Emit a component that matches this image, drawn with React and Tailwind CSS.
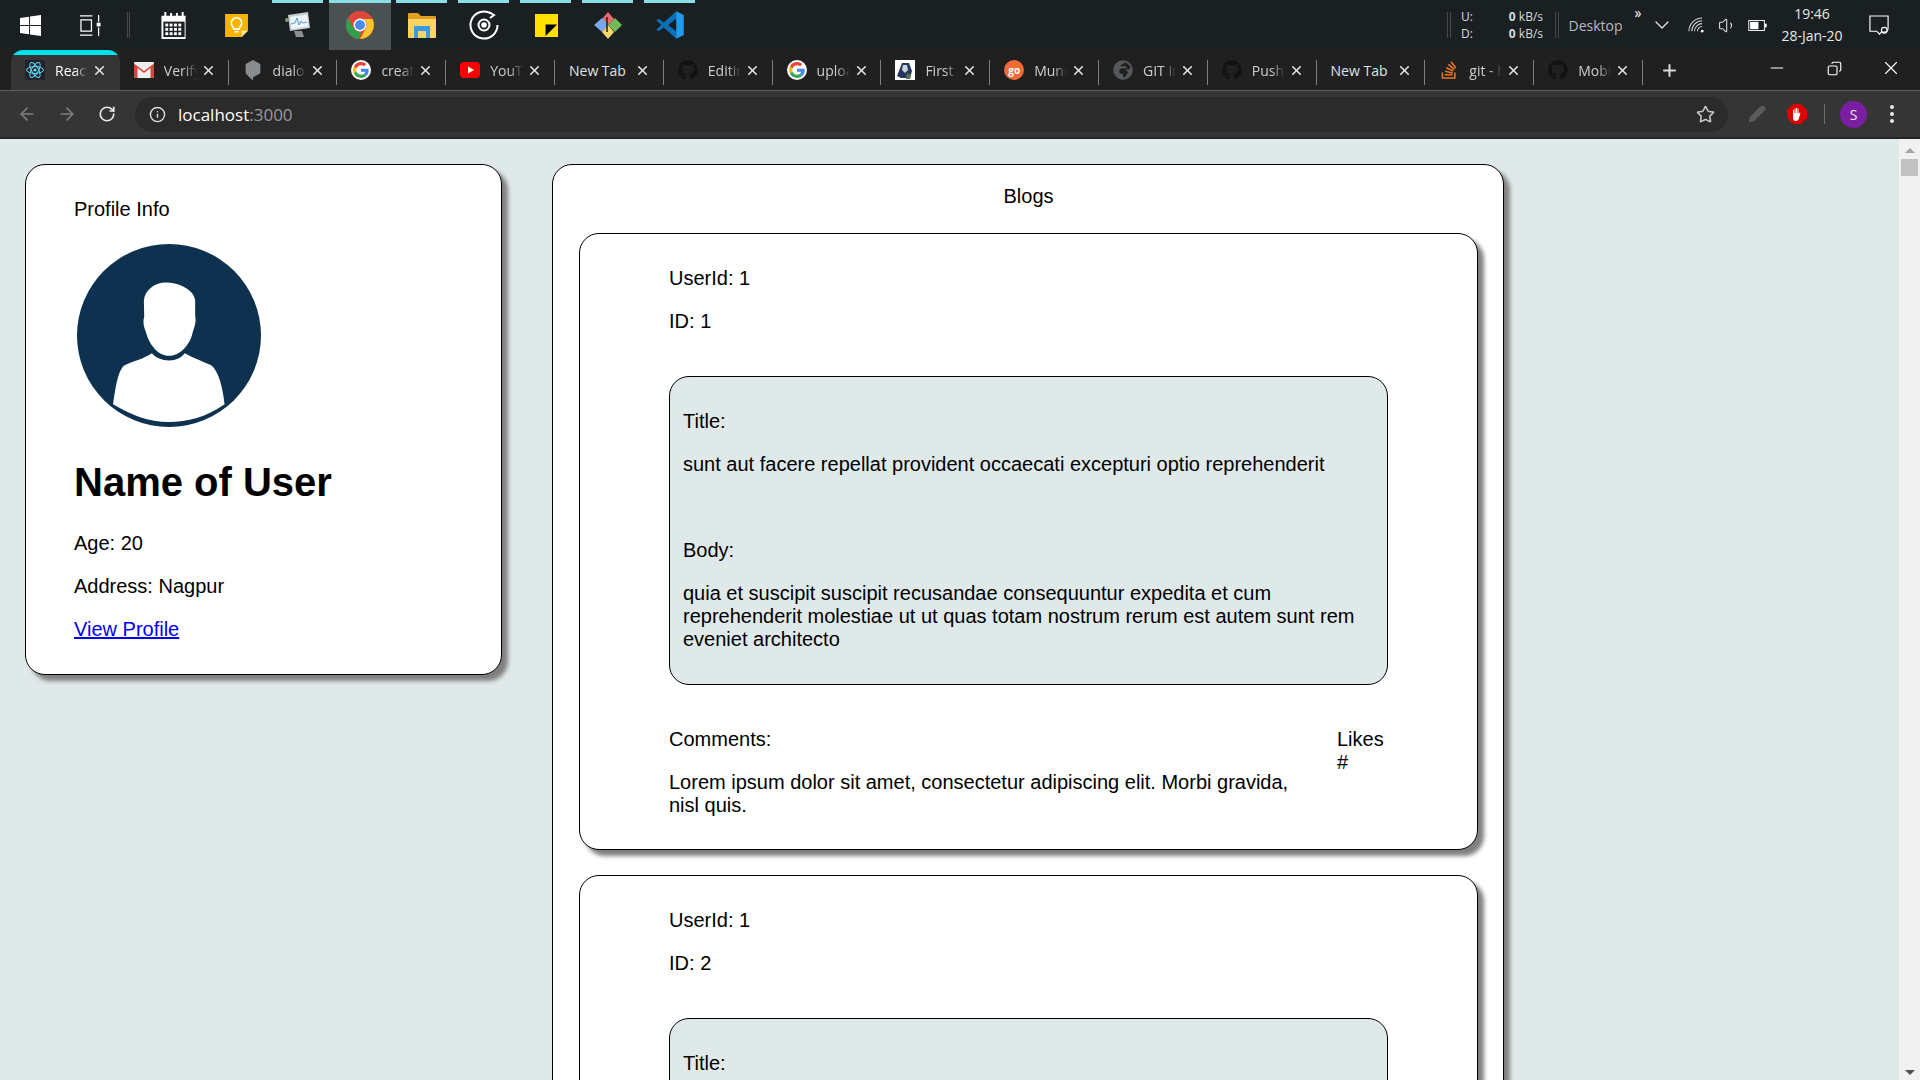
import { ArrowLeft, ArrowRight, RotateCw, Info, Star, X, Plus, Minus, Pencil, ChevronDown, Copy, Volume1 } from 'lucide-react';
import { FaGithub, FaStackOverflow, FaGlobeAfrica } from 'react-icons/fa';

const GoogleG = () => (
  <span className="flex h-5 w-5 items-center justify-center rounded-full bg-white">
    <svg viewBox="0 0 48 48" className="h-4 w-4">
      <path fill="#EA4335" d="M24 9.5c3.54 0 6.71 1.22 9.21 3.6l6.85-6.85C35.9 2.38 30.47 0 24 0 14.62 0 6.51 5.38 2.56 13.22l7.98 6.19C12.43 13.72 17.74 9.5 24 9.5z" />
      <path fill="#4285F4" d="M46.98 24.55c0-1.57-.15-3.09-.38-4.55H24v9.02h12.94c-.58 2.96-2.26 5.48-4.78 7.18l7.73 6c4.51-4.18 7.09-10.36 7.09-17.65z" />
      <path fill="#FBBC05" d="M10.53 28.59c-.48-1.45-.76-2.99-.76-4.59s.27-3.14.76-4.59l-7.98-6.19C.92 16.46 0 20.12 0 24c0 3.88.92 7.54 2.56 10.78l7.97-6.19z" />
      <path fill="#34A853" d="M24 48c6.48 0 11.93-2.13 15.89-5.81l-7.73-6c-2.15 1.45-4.92 2.3-8.16 2.3-6.26 0-11.57-4.22-13.47-9.91l-7.98 6.19C6.51 42.62 14.62 48 24 48z" />
    </svg>
  </span>
);

const ReactIcon = () => (
  <svg viewBox="0 0 20 20" className="h-5 w-5">
    <rect width="20" height="20" rx="2" fill="#20232a" />
    <g fill="none" stroke="#61dafb" strokeWidth="1">
      <ellipse cx="10" cy="10" rx="8.5" ry="3.4" />
      <ellipse cx="10" cy="10" rx="8.5" ry="3.4" transform="rotate(60 10 10)" />
      <ellipse cx="10" cy="10" rx="8.5" ry="3.4" transform="rotate(120 10 10)" />
    </g>
    <circle cx="10" cy="10" r="1.6" fill="#61dafb" />
  </svg>
);

const GmailIcon = () => (
  <svg viewBox="0 0 20 16" className="h-4 w-5">
    <rect width="20" height="16" rx="1" fill="#eee" />
    <path d="M0 1.5 10 9l10-7.5V15a1 1 0 0 1-1 1h-2.5V6L10 11 3.500 6v10H1a1 1 0 0 1-1-1z" fill="#d44638" />
  </svg>
);

const DialogIcon = () => (
  <svg viewBox="0 0 20 24" className="h-[22px] w-5">
    <path d="M10 1 18 5.500v10L10 20v3.500L6 20 2 15.500v-10z" fill="#8a8d8f" />
  </svg>
);

const YoutubeIcon = () => (
  <svg viewBox="0 0 20 20" className="h-5 w-5">
    <rect y="2" width="20" height="16" rx="4" fill="#f00" />
    <path d="M8 6.500 14 10l-6 3.500z" fill="#fff" />
  </svg>
);

const ThumbIcon = () => (
  <svg viewBox="0 0 20 20" className="h-5 w-5">
    <rect width="20" height="20" fill="#fff" />
    <path d="M2 16 7 3h7l3 8-2 7H6z" fill="#27375c" />
    <path d="M8 5h4l1 5-3 3-3-3z" fill="#c9d4de" />
    <path d="M12 13l4 2-1 4h-4z" fill="#56705a" />
  </svg>
);

const GoIcon = () => (
  <span className="flex h-5 w-5 items-center justify-center rounded-full bg-[#f26b36] text-[10px] font-bold leading-none text-white">go</span>
);

const GitDark = () => <FaGithub className="h-5 w-5 text-[#111213]" />;

const tabs = [
  { icon: <ReactIcon />, label: 'React App', active: true },
  { icon: <GmailIcon />, label: 'Verify your' },
  { icon: <DialogIcon />, label: 'dialogflow' },
  { icon: <GoogleG />, label: 'create' },
  { icon: <YoutubeIcon />, label: 'YouTube' },
  { label: 'New Tab', plain: true },
  { icon: <GitDark />, label: 'Editing' },
  { icon: <GoogleG />, label: 'upload' },
  { icon: <ThumbIcon />, label: 'First' },
  { icon: <GoIcon />, label: 'Munna' },
  { icon: <FaGlobeAfrica className="h-5 w-5 text-[#55585c]" />, label: 'GIT Ins' },
  { icon: <GitDark />, label: 'Pushing' },
  { label: 'New Tab', plain: true },
  { icon: <FaStackOverflow className="h-5 w-5 text-[#e87722]" />, label: 'git - ho' },
  { icon: <GitDark />, label: 'Mobile' },
];

const Tab = ({ icon, label, active, plain }) => (
  <div className={`relative flex h-full w-[108.8px] shrink-0 items-center ${active ? 'overflow-hidden rounded-t-xl bg-[#353535]' : ''}`}>
    {active && <div className="absolute inset-x-0 top-0 h-[5px] bg-[#00e3ee]" />}
    {plain ? (
      <span className="ml-[14px] w-[66px] shrink-0 overflow-hidden whitespace-nowrap text-[14px] text-[#dfe3e6]">{label}</span>
    ) : (
      <>
        <span className="ml-[14px] flex w-5 shrink-0 items-center justify-center">{icon}</span>
        <span className={`ml-[10px] w-[33px] shrink-0 overflow-hidden whitespace-nowrap text-[14px] [mask-image:linear-gradient(to_right,black_60%,transparent)] ${active ? 'text-white' : 'text-[#c9ced2]'}`}>{label}</span>
      </>
    )}
    <X className={`h-[15px] w-[15px] shrink-0 text-[#e3e3e3] ${plain ? 'ml-0' : 'ml-1'}`} strokeWidth={2.5} />
    {!active && <div className="absolute right-0 top-[10px] h-[25px] w-[1px] bg-[#7c7f80]" />}
  </div>
);

const TaskItem = ({ children, underline, active }) => (
  <div className={`relative flex h-[50px] w-[62px] shrink-0 items-center justify-center ${active ? 'bg-[#4b5051]' : ''}`}>
    {underline && <div className={`absolute top-0 h-[3px] bg-[#8adfe6] ${active ? 'inset-x-0' : 'left-[5px] right-[6px]'}`} />}
    {children}
  </div>
);

const Taskbar = () => (
  <div className="flex h-[50px] shrink-0 items-center bg-[#1a1f21] text-white">
    <div className="flex w-[60px] shrink-0 justify-center">
      <svg viewBox="0 0 22 22" className="h-[21px] w-[21px]">
        <path fill="#fff" d="M0 3.200 9.500 1.900V10.500H0zM10.500 1.700 22 0V10.500H10.500zM0 11.500H9.500V20.200L0 18.800zM10.500 11.500H22V22L10.500 20.400z" />
      </svg>
    </div>
    <div className="flex w-[60px] shrink-0 justify-center">
      <svg viewBox="0 0 22 22" className="h-[21px] w-[21px]" fill="none" stroke="#fff" strokeWidth="1.300">
        <path d="M0 1h13M0 21h13M1 5h11v12H1zM19.500 0v7M19.500 13v9" />
        <rect x="17.500" y="8" width="4" height="4" fill="#fff" stroke="none" />
      </svg>
    </div>
    <div className="ml-[7px] h-[26px] w-[3px] shrink-0 border-x border-[#45494b]" />
    <div className="w-[13px] shrink-0" />
    <TaskItem>
      <svg viewBox="0 0 26 28" className="h-[27px] w-[26px]">
        <path fill="#fff" d="M0 4h3V0h2v4h4V1h2v3h4V1h2v3h4V0h2v4h2v24H0z" />
        <rect x="2" y="10" width="22" height="16" fill="#1a1f21" />
        {[4, 8.500, 13, 17.500].map((x) => [12, 16.500, 21].map((y) => <rect key={`${x}-${y}`} x={x} y={y} width="3" height="3" fill="#fff" />))}
      </svg>
    </TaskItem>
    <TaskItem>
      <svg viewBox="0 0 24 24" className="h-[25px] w-[25px]">
        <path fill="#f4b400" d="M1 1h22v16l-6 6H1z" />
        <path fill="#fce8a8" d="M23 17h-6v6z" />
        <path fill="none" stroke="#fff" strokeWidth="1.500" d="M9.500 15.500c0-2-2.500-3-2.500-6a5 5 0 0 1 10 0c0 3-2.500 4-2.500 6zM10 18h4" />
      </svg>
    </TaskItem>
    <TaskItem underline>
      <svg viewBox="0 0 28 28" className="h-7 w-7">
        <path fill="#c7cdd1" d="M4 4 24 1l2 16-20 3z" />
        <path fill="#eff4f8" d="M6 6 23 3.500l1.500 12L7.500 18z" />
        <path fill="none" stroke="#4f9bd0" strokeWidth="1" d="M7 13l4-1 2-5 2 7 2-4 2 2 4-1" />
        <path fill="#8b9094" d="M10 20h8l2 6h-8z" />
        <circle cx="3" cy="9" r="2" fill="#7fa46e" />
      </svg>
    </TaskItem>
    <TaskItem underline active>
      <svg viewBox="0 0 28 28" className="h-7 w-7">
        <circle cx="14" cy="14" r="14" fill="#e0463a" />
        <path fill="#f7c52c" d="M14 8h12.600A14 14 0 0 1 14 28l6-11a6 6 0 0 0-6-9z" />
        <path fill="#2fa04e" d="M1.800 7 8 17.500A6.500 6.500 0 0 0 15 20.500L13.500 28A14 14 0 0 1 1.800 7z" />
        <circle cx="14" cy="14" r="6.500" fill="#fff" />
        <circle cx="14" cy="14" r="5" fill="#4a8bf0" />
      </svg>
    </TaskItem>
    <TaskItem underline>
      <svg viewBox="0 0 28 26" className="h-[26px] w-7">
        <path fill="#e0a020" d="M0 2a1 1 0 0 1 1-1h9l3 3h14a1 1 0 0 1 1 1v4H0z" />
        <path fill="#fcd462" d="M0 7h28v18a1 1 0 0 1-1 1H1a1 1 0 0 1-1-1z" />
        <path fill="#3c9be0" d="M6 14h16v12h-4v-7H10v7H6z" />
      </svg>
    </TaskItem>
    <TaskItem underline>
      <svg viewBox="0 0 30 30" className="h-[30px] w-[30px]" fill="none" stroke="#fff" strokeWidth="2">
        <path d="M22 3.500A13.500 13.500 0 1 0 28.500 15" />
        <circle cx="15" cy="15" r="5.500" />
        <circle cx="15" cy="15" r="1.800" fill="#fff" />
        <path d="M20 2l5 3-4 3" />
      </svg>
    </TaskItem>
    <TaskItem underline>
      <svg viewBox="0 0 24 24" className="h-[23px] w-[23px]">
        <rect width="24" height="24" fill="#ffe000" />
        <path d="M11 23 23 11H11z" fill="#000" />
      </svg>
    </TaskItem>
    <TaskItem underline>
      <svg viewBox="0 0 30 30" className="h-[30px] w-[30px]">
        <path fill="#e86a6f" d="m15 15-6-6 6-7 6 7z" />
        <path fill="#7aa7f0" d="m15 15-6 7-8-7 8-7z" />
        <path fill="#74b85a" d="m15 15 7-7 7 7-7 7z" />
        <path fill="#f5d76e" d="m15 15 6 7-6 7-6-7z" />
        <path stroke="#1a1f21" strokeWidth="1.500" d="M14 7v15" />
      </svg>
    </TaskItem>
    <TaskItem underline>
      <svg viewBox="0 0 24 24" className="h-[30px] w-[30px]">
        <path fill="#0a71b8" d="M17 1 7 10 3 7 1 8.200 5 12l-4 3.800L3 17l4-3 10 9v-6l-6.500-5L17 7z" />
        <path fill="#1f9cf0" d="m17 1 6 3v16l-6 3z" />
      </svg>
    </TaskItem>

    <div className="ml-auto flex h-full items-center pr-[18px]">
      <div className="h-[26px] w-[4px] shrink-0 border-x border-[#45494b]" />
      <div className="flex w-[104px] shrink-0 justify-between pl-[10px] pr-[12px] text-[12px] leading-[17px] text-[#d8dadb]">
        <div><div>U:</div><div>D:</div></div>
        <div><div><b>0</b> kB/s</div><div><b>0</b> kB/s</div></div>
      </div>
      <div className="h-[26px] w-[4px] shrink-0 border-x border-[#45494b]" />
      <div className="w-[73px] shrink-0 text-center text-[14px] text-[#b6babc]">Desktop</div>
      <div className="-mt-6 w-3 shrink-0 text-center text-[14px] leading-none">»</div>
      <div className="flex w-9 shrink-0 justify-center"><ChevronDown className="h-6 w-6 text-[#e4e4e4]" strokeWidth={1.300} /></div>
      <div className="flex w-8 shrink-0 justify-center">
        <svg viewBox="0 0 18 18" className="h-[17px] w-[17px]" fill="none" stroke="#cfd1d2" strokeWidth="1.100">
          <path d="M1 15A14 14 0 0 1 15 1M4 15A11 11 0 0 1 15 4M7 15a8 8 0 0 1 8-8M10 15a5 5 0 0 1 5-5" />
          <circle cx="15" cy="15" r="1.400" fill="#fff" stroke="none" />
        </svg>
      </div>
      <div className="flex w-[34px] shrink-0 justify-center pr-[4px]"><Volume1 className="h-[19px] w-[19px] text-[#e4e4e4]" strokeWidth={1.300} /></div>
      <div className="flex w-[22px] shrink-0 justify-center">
        <svg viewBox="0 0 20 12" className="h-[11px] w-[19px]">
          <rect x="0.500" y="0.500" width="17" height="11" fill="none" stroke="#fff" />
          <rect x="2" y="2" width="9" height="8" fill="#fff" />
          <rect x="18" y="4" width="2" height="4" fill="#fff" />
        </svg>
      </div>
      <div className="w-[88px] shrink-0 text-center text-[14px] leading-[22px] text-[#e8e8e8]">
        <div>19:46</div>
        <div>28-Jan-20</div>
      </div>
      <div className="flex w-[46px] shrink-0 justify-center">
        <svg viewBox="0 0 22 22" className="h-[21px] w-[21px]" fill="none" stroke="#fff" strokeWidth="1.200">
          <path d="M1 1h19v13a4 4 0 0 1-4 4h-3l-2 2-2-2-1-1H1z" />
          <circle cx="16" cy="16" r="3" />
        </svg>
      </div>
    </div>
  </div>
);

const TabStrip = () => (
  <div className="flex h-[41px] shrink-0 items-stretch border-b border-[#5c5c5c] bg-[#202020]">
    <div className="flex pl-[11px]">
      {tabs.map((t, i) => <Tab key={i} {...t} />)}
    </div>
    <div className="ml-[17px] flex items-center">
      <Plus className="h-[19px] w-[19px] text-[#d8d8d8]" strokeWidth={2.500} />
    </div>
    <div className="ml-auto flex items-center text-white">
      <div className="flex w-[58px] justify-center pb-1"><Minus className="h-5 w-5" strokeWidth={1.200} /></div>
      <div className="flex w-[56px] justify-center pb-1"><Copy className="h-[15px] w-[15px] -scale-x-100" strokeWidth={1.800} /></div>
      <div className="flex w-[58px] justify-center pb-1"><X className="h-[22px] w-[22px]" strokeWidth={1.200} /></div>
    </div>
  </div>
);

const Toolbar = () => (
  <div className="flex h-[48px] shrink-0 items-center border-b-2 border-[#242424] bg-[#353535]">
    <div className="flex w-[54px] shrink-0 justify-center"><ArrowLeft className="h-5 w-5 text-[#7d7d7d]" strokeWidth={2} /></div>
    <div className="flex w-[26px] shrink-0 justify-center"><ArrowRight className="h-5 w-5 text-[#7d7d7d]" strokeWidth={2} /></div>
    <div className="flex w-[54px] shrink-0 justify-center"><RotateCw className="h-[18px] w-[18px] text-[#e8e8e8]" strokeWidth={2.200} /></div>
    <div className="ml-[1px] flex h-[35px] w-[1593px] shrink-0 items-center rounded-full bg-[#2b2b2b]">
      <Info className="ml-[14px] h-[17px] w-[17px] text-[#dedede]" strokeWidth={2} />
      <span className="ml-[12px] text-[17px] leading-none text-white">localhost<span className="text-[#9a9a9a]">:3000</span></span>
      <Star className="ml-auto mr-[13px] h-[19px] w-[19px] text-[#c8c8c8]" strokeWidth={2} />
    </div>
    <div className="ml-[19px] flex w-5 shrink-0 justify-center"><Pencil className="h-[18px] w-[18px] fill-[#5b5b5b] text-[#5b5b5b]" /></div>
    <div className="ml-[20px] flex h-5 w-5 shrink-0 items-center justify-center bg-[#e00000] [clip-path:polygon(30%_0,70%_0,100%_30%,100%_70%,70%_100%,30%_100%,0_70%,0_30%)]">
      <svg viewBox="0 0 12 14" className="h-[14px] w-3"><path fill="#fff" d="M2 6V3h1v3h.5V1.500h1V6H5V1h1v5h.5V1.500h1V7l1-1.500 1 .5L8 11c-.5 2-1.500 3-3 3-2 0-3-1-3-3z" /></svg>
    </div>
    <div className="ml-[17px] h-[20px] w-[1px] shrink-0 bg-[#6c6c6c]" />
    <div className="ml-[15px] flex h-[27px] w-[27px] shrink-0 items-center justify-center rounded-full bg-[#7b1fa2] text-[14px] text-[#e8e8e8]">S</div>
    <div className="ml-[23px] flex shrink-0 flex-col gap-[3px]">
      <span className="h-1 w-1 rounded-full bg-[#e8e8e8]" />
      <span className="h-1 w-1 rounded-full bg-[#e8e8e8]" />
      <span className="h-1 w-1 rounded-full bg-[#e8e8e8]" />
    </div>
  </div>
);

const Avatar = () => (
  <svg viewBox="224 292 531 512" preserveAspectRatio="none" className="ml-[3px] mt-[23px] block h-[183px] w-[184px]">
    <ellipse cx="489.500" cy="548" rx="265.500" ry="256" fill="#0e3150" />
    <path fill="#fff" d="M480 400C510 400 560 415 565 450L565 495C570 510 560 530 555 550C540 590 510 605 490 605C470 605 440 590 425 545C420 530 412 515 418 495L417 450C420 420 450 400 480 400Z" />
    <path fill="#fff" d="M440 598C450 610 470 618 490 618C510 618 525 610 535 598C560 612 590 622 612 632C635 650 645 700 650 740C600 775 540 790 490 790C430 790 380 770 328 740C335 700 340 650 360 632C385 620 415 615 440 598Z" />
  </svg>
);

const ProfileCard = () => (
  <div className="w-[477px] shrink-0 rounded-[20px] border border-black bg-white pb-[33px] pl-[48px] pt-[33px] shadow-[6px_6px_4px_#808080]">
    <p>Profile Info</p>
    <Avatar />
    <h1 className="mt-[32px] text-[40px] font-bold leading-[46px]">Name of User</h1>
    <p className="mt-[27px]">Age: 20</p>
    <p className="mt-5">Address: Nagpur</p>
    <p className="mt-5"><a href="#" className="text-[#0000ee] underline">View Profile</a></p>
  </div>
);

const posts = [
  {
    id: 1,
    title: 'sunt aut facere repellat provident occaecati excepturi optio reprehenderit',
    body: 'quia et suscipit suscipit recusandae consequuntur expedita et cum reprehenderit molestiae ut ut quas totam nostrum rerum est autem sunt rem eveniet architecto',
  },
  {
    id: 2,
    title: 'qui est esse',
    body: 'est rerum tempore vitae sequi sint nihil reprehenderit dolor beatae ea dolores neque fugiat blanditiis voluptate porro vel nihil molestiae ut reiciendis qui aperiam non debitis possimus qui neque nisi nulla',
  },
];

const BlogPost = ({ post }) => (
  <div className="rounded-[20px] border border-black bg-white pb-[32px] pl-[89px] pr-[89px] pt-[33px] shadow-[6px_6px_4px_#808080]">
    <p>UserId: 1</p>
    <p className="mt-5">ID: {post.id}</p>
    <div className="mt-[43px] rounded-[20px] border border-black bg-[#e0e9ea] pb-[33px] pl-[13px] pr-[13px] pt-[33px]">
      <p>Title:</p>
      <p className="mt-5">{post.title}</p>
      <p className="mt-[63px]">Body:</p>
      <p className="mt-5">{post.body}</p>
    </div>
    <div className="mt-[43px] flex gap-[28px]">
      <div className="w-[640px] shrink-0">
        <p>Comments:</p>
        <p className="mt-5">Lorem ipsum dolor sit amet, consectetur adipiscing elit. Morbi gravida, nisl quis.</p>
      </div>
      <div>
        <p>Likes</p>
        <p>#</p>
      </div>
    </div>
  </div>
);

const BlogList = () => (
  <div className="ml-[50px] w-[952px] shrink-0 rounded-[20px] border border-black bg-white pb-8 pl-[26px] pr-[25px] pt-[20px] shadow-[6px_6px_4px_#808080]">
    <p className="text-center">Blogs</p>
    <div className="mt-[25px] flex flex-col gap-[25px]">
      {posts.map((post) => <BlogPost key={post.id} post={post} />)}
    </div>
  </div>
);

const Scrollbar = () => (
  <div className="flex w-[21px] shrink-0 flex-col items-center bg-[#f1f1f1]">
    <div className="mt-[9px] h-0 w-0 border-x-[5px] border-b-[5px] border-x-transparent border-b-[#a3a3a3]" />
    <div className="mt-[6px] h-[17px] w-[17px] bg-[#c1c1c1]" />
    <div className="mb-[5px] mt-auto h-0 w-0 border-x-[5px] border-t-[5px] border-x-transparent border-t-[#505050]" />
  </div>
);

export default function App() {
  return (
    <div className="flex h-screen flex-col overflow-hidden font-['Open_Sans',sans-serif]">
      <Taskbar />
      <TabStrip />
      <Toolbar />
      <div className="flex min-h-0 flex-1">
        <div className="flex flex-1 items-start overflow-hidden bg-[#e0e9ea] pl-[25px] pt-[25px] font-['Liberation_Sans',Arial,sans-serif] text-[20px] leading-[23px] text-black">
          <ProfileCard />
          <BlogList />
        </div>
        <Scrollbar />
      </div>
    </div>
  );
}
